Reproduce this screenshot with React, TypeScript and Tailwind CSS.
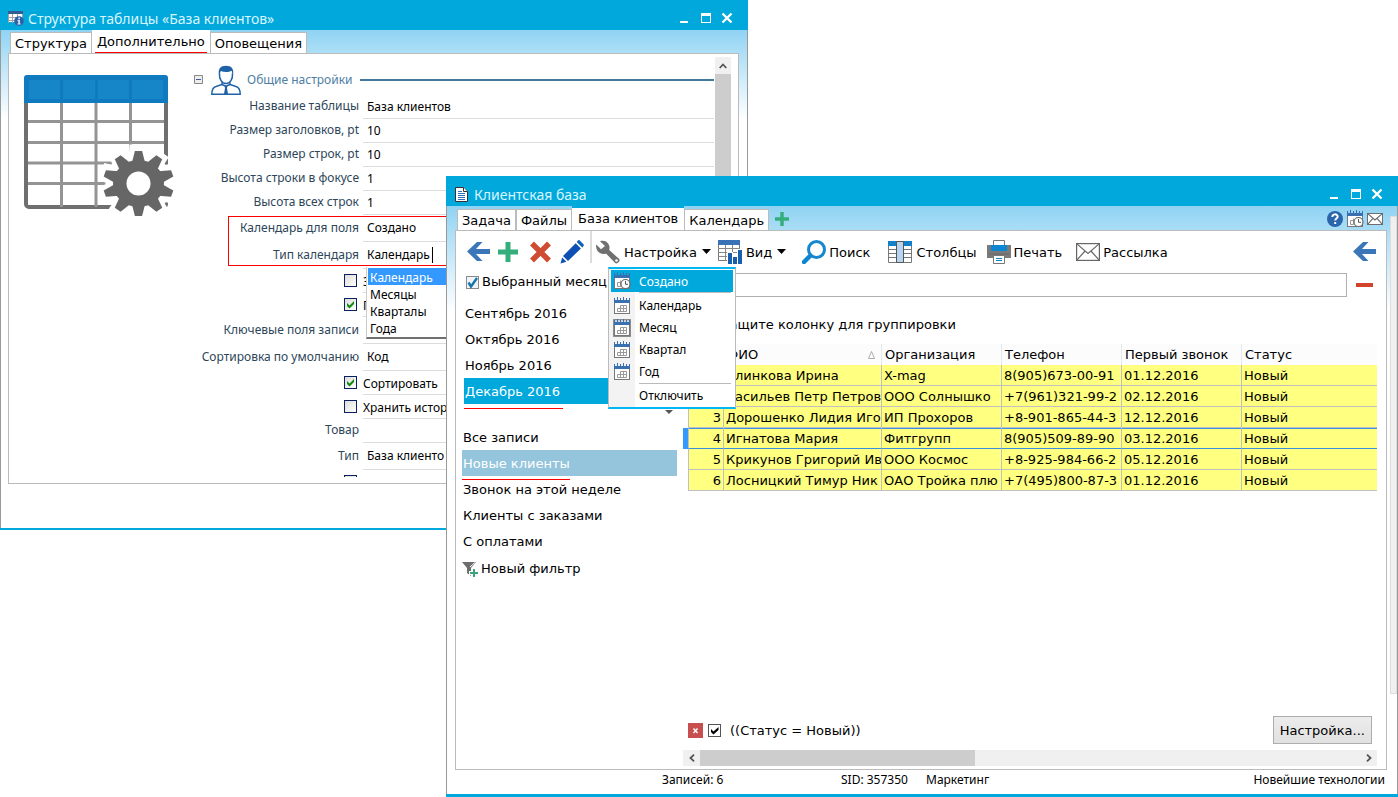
import React from 'react';

const VERDANA = "font-['Verdana','DejaVu_Sans',sans-serif]";
const SEGOE = "font-['Segoe_UI','Noto_Sans',sans-serif]";

type WindowButtonsProps = { className?: string };

function WindowButtons({ className = '' }: WindowButtonsProps) {
  return (
    <div className={`flex items-center gap-[9px] ${className}`}>
      <button type="button" aria-label="Свернуть" className="h-4 w-4">
        <svg viewBox="0 0 16 16" className="h-4 w-4"><path d="M5 11h8v2H5z" fill="#fff" /></svg>
      </button>
      <button type="button" aria-label="Развернуть" className="h-4 w-3">
        <svg viewBox="0 0 12 16" className="h-4 w-3"><path d="M1 3h10v10H1z M2 6v6h8V6z" fill="#fff" fillRule="evenodd" /></svg>
      </button>
      <button type="button" aria-label="Закрыть" className="h-4 w-3">
        <svg viewBox="0 0 12 16" className="h-4 w-3"><path d="M1.500 3.500l9 9M10.500 3.500l-9 9" stroke="#fff" strokeWidth="2.400" /></svg>
      </button>
    </div>
  );
}

function TableInfoIcon() {
  return (
    <svg viewBox="0 0 16 16" className="h-4 w-4">
      <path d="M0 1h15v11H0z" fill="#fff" />
      <path d="M0 1h15v3H0z" fill="#2f5d94" />
      <path d="M0 7.500h15M0 10.500h9M4.500 4v9M9.500 4v4M14.500 4v4M.5 4v9" stroke="#a3a3a3" strokeWidth="1" fill="none" />
      <circle cx="11" cy="11" r="4.800" fill="#2d62a8" />
      <path d="M10.200 7.600h1.800v1.600h-1.800zM9.400 10h2.600v3.400h.8v1H9.400v-1h.8V11h-.8z" fill="#cfe3f6" />
    </svg>
  );
}

function DocIcon() {
  return (
    <svg viewBox="0 0 13 15" className="h-[15px] w-[13px]">
      <path d="M.5.500h8l4 4v10H.5z" fill="#fff" stroke="#333" />
      <path d="M8.500.500v4h4" fill="#fff" stroke="#333" />
      <path d="M3 4.500h4M3 6.500h7M3 8.500h7M3 10.500h7M3 12.500h7" stroke="#2f6fb5" />
    </svg>
  );
}

function TableGearArt() {
  const teeth = [0, 36, 72, 108, 144, 180, 216, 252, 288, 324];
  return (
    <svg viewBox="24 75 152 142" className="h-[142px] w-[152px]" aria-hidden="true">
      <rect x="26" y="77" width="140" height="130" rx="3" fill="#fff" stroke="#6f6f6f" strokeWidth="4" />
      <path d="M61.500 103v104M96 103v104M130.500 103v104" stroke="#949494" strokeWidth="3" />
      <path d="M28 121.500h136M28 142.500h136M28 163h136M28 183.500h136" stroke="#949494" strokeWidth="3" />
      <path d="M24 103V78a3 3 0 0 1 3-3h138a3 3 0 0 1 3 3v25z" fill="#0f7abd" />
      <path d="M29 80h31v19H29zM63 80h32v19H63zM98 80h31v19H98zM132 80h31v19h-31z" fill="#1786c9" />
      <g transform="translate(138.500 183.500)">
        <circle r="33" fill="#fff" />
        {teeth.map((a) => (
          <path key={`w${a}`} d="M-10 -22L-9 -39H9L10 -22z" fill="#fff" transform={`rotate(${a})`} />
        ))}
        <ellipse rx="25.500" ry="23.500" fill="#666" />
        <g transform="scale(1.09 1)">
          {teeth.map((a) => (
            <path key={a} d="M-6 -21L-3.300 -32.500H3.300L6 -21z" fill="#666" transform={`rotate(${a})`} />
          ))}
        </g>
        <circle r="12" fill="#fff" />
      </g>
    </svg>
  );
}

function PersonIcon() {
  return (
    <svg viewBox="0 0 30 30" className="h-[30px] w-[30px]" fill="none" stroke="#1f62a8" strokeWidth="1.500">
      <path d="M8.500 8.500C8 14 11 18.500 15 18.500s7-4.500 6.500-10" />
      <path d="M8 10C6.800 4 9.500.8 15 .8S23.200 4 22 10c-.8-1.500-1-3-1.300-4.200-3 1.600-7.600 1.700-10.900.2C9.300 7.200 9 8.500 8 10z" fill="#1f62a8" stroke="none" />
      <path d="M11 17.500v2L5 21.500C1.500 22.500.8 25 .8 29.200h28.400c0-4.200-.7-6.700-4.200-7.700l-6-2v-2" />
      <path d="M11 19.500l4 1.800 4-1.800" />
      <path d="M13.500 21h3l-.5 2 1 6h-4l1-6z" fill="#1f62a8" stroke="none" />
    </svg>
  );
}

function CalendarIcon({ clock = false, framed = false }: { clock?: boolean; framed?: boolean }) {
  return (
    <svg viewBox="0 0 18 18" className="h-[18px] w-[18px]">
      {framed && <rect x=".5" y=".5" width="17" height="17" rx="1" fill="#ddd" stroke="#8c8c8c" strokeWidth="1.500" />}
      <rect x="1.500" y="5.500" width="15" height="11" fill="#fff" stroke="#777" />
      <path d="M1 1h1v2h2V0h1v3h2V1h1v2h2V0h1v3h2V1h1v2h2V1h1v5H1z" fill="#3a6fb0" />
      {clock ? (
        <>
          <path d="M4.500 10.500h3v4h-3z M7.500 8.500v3" fill="none" stroke="#999" />
          <circle cx="12.500" cy="12" r="4.500" fill="#fff" stroke="#666" strokeWidth="1.200" />
          <path d="M12.500 9v3.300h2.500" fill="none" stroke="#555" />
        </>
      ) : (
        <path d="M7.500 8.500h6v6h-9v-3h9M7.500 8.500v6M10.500 8.500v6" fill="none" stroke="#999" />
      )}
    </svg>
  );
}

function ArrowLeftIcon() {
  return (
    <svg viewBox="0 0 24 24" className="h-6 w-6">
      <path d="M0 11.500L10 2h5.500L9 9H23v5H9l6.500 7H10z" fill="#3b77b8" />
    </svg>
  );
}

function PlusIcon({ className }: { className: string }) {
  return (
    <svg viewBox="0 0 20 20" preserveAspectRatio="xMinYMid meet" className={className}>
      <path d="M7.500 0h5v7.500H20v5h-7.500V20h-5v-7.500H0v-5h7.500z" fill="#35ae7c" />
    </svg>
  );
}

function MailIcon({ className, weight }: { className: string; weight: number }) {
  return (
    <svg viewBox="0 0 24 18" className={className} fill="none" stroke="#666" strokeWidth={weight}>
      <rect x=".6" y=".6" width="22.800" height="16.800" fill="#fff" />
      <path d="M.6.600L12 10.500 23.400.6M.6 17.400L9 8M23.400 17.400L15 8" />
    </svg>
  );
}

function Caret() {
  return (
    <svg viewBox="0 0 9 5" className="h-[5px] w-[9px]"><path d="M0 0h9L4.500 5z" fill="#000" /></svg>
  );
}

function Toolbar() {
  return (
    <div className="flex h-[41px] items-center pr-[9px] pl-[11px]">
      <div className="flex items-center gap-[7px]">
        <button type="button" aria-label="Назад"><ArrowLeftIcon /></button>
        <button type="button" aria-label="Добавить"><PlusIcon className="h-5 w-6" /></button>
        <button type="button" aria-label="Удалить">
          <svg viewBox="0 0 24 24" className="h-6 w-6"><path d="M3 3.500l17 17M20 3.500l-17 17" stroke="#cf4b32" strokeWidth="5.500" /></svg>
        </button>
        <button type="button" aria-label="Изменить">
          <svg viewBox="0 0 24 24" className="h-6 w-6" fill="#0d4fb5">
            <path d="M19.500 .3l4 3.900c.8.800 0 2-.5 2.500l-.8.800-5.500-5.500.8-1c.6-.6 1.400-1.200 2-.7z" fill="#0d63b8" />
            <path d="M15.700 3.300l5.200 5.200L8 21l-5-5z" />
            <path d="M2.200 17.500l4.200 4.200L.5 23.500z" />
          </svg>
        </button>
      </div>
      <span className="mr-[5px] ml-1.5 h-8 w-0.5 self-start bg-[#dcdcdc]" />
      <button type="button" className="-ml-px flex items-center gap-1">
        <svg viewBox="0 0 24 24" className="h-6 w-6 shrink-0">
          <path d="M4 1.200C7.500 0 11.500 1.200 13 5c.7 1.700.6 3.500.2 5l10 9c1.800 1.800-2.200 5.800-4 4L10 13.500C6.500 15 3 13 1.500 11 .3 9.300-.2 6.300.3 4.500L5 9.300 9 6z" fill="#707070" />
          <circle cx="20.500" cy="20.500" r="1.300" fill="#fff" />
        </svg>
        <span className="pt-0.5">Настройка</span>
        <span className="ml-px"><Caret /></span>
      </button>
      <button type="button" className="ml-[7px] flex items-center gap-1">
        <svg viewBox="0 0 24 24" className="h-6 w-6 shrink-0">
          <path d="M.5.500h21v20H.5z" fill="#fff" stroke="#777" />
          <path d="M0 0h22v5H0z" fill="#3b72b5" />
          <path d="M0 8.500h22M0 12.500h22M0 16.500h22M7.500 5v16M14.500 5v16" stroke="#888" />
          <path d="M9 12h6v4h4V9h5v15H9z" fill="#fff" />
          <path d="M10 13h4v11h-4zM15 17h4v7h-4zM20 10h4v14h-4z" fill="#1a5fae" />
        </svg>
        <span className="pt-0.5">Вид</span>
        <span className="ml-px"><Caret /></span>
      </button>
      <button type="button" className="ml-4 flex items-center gap-[3px]">
        <svg viewBox="0 0 24 24" className="h-6 w-6 shrink-0">
          <path d="M2 22l6.500-6.500" stroke="#0c84d0" strokeWidth="4.500" strokeLinecap="round" />
          <circle cx="14.500" cy="9.500" r="8" fill="#fff" stroke="#1487cf" strokeWidth="3" />
        </svg>
        <span className="pt-0.5">Поиск</span>
      </button>
      <button type="button" className="ml-[18px] flex items-center gap-1">
        <svg viewBox="0 0 24 22" className="h-[22px] w-6 shrink-0">
          <path d="M.5.500h23v21H.5z" fill="#fff" stroke="#777" />
          <path d="M0 0h24v5H0z" fill="#1480c8" />
          <path d="M0 8.500h24M0 12.500h24M0 16.500h24" stroke="#777" />
          <path d="M8.500.500h7v21h-7z" fill="#b5d5f0" stroke="#555" />
        </svg>
        <span className="pt-0.5">Столбцы</span>
      </button>
      <button type="button" className="ml-[10px] flex items-center gap-[3px]">
        <svg viewBox="0 0 24 24" className="h-6 w-6 shrink-0">
          <path d="M0 5h4v4h16V5h4v13H0z" fill="#7a7a7a" />
          <path d="M6.500.500h11v5h-11z" fill="#fff" stroke="#777" />
          <path d="M4 5h16v6H4z" fill="#0f86d2" />
          <path d="M2 14h20" stroke="#666" />
          <path d="M6.500 15.500h11v8h-11z" fill="#fff" stroke="#777" />
          <path d="M9 18.500h6M9 20.500h6" stroke="#1480c8" />
        </svg>
        <span className="pt-0.5">Печать</span>
      </button>
      <button type="button" className="ml-[14px] flex items-center gap-[3px]">
        <MailIcon className="h-[18px] w-6 shrink-0" weight={1.2} />
        <span className="pt-0.5">Рассылка</span>
      </button>
      <button type="button" aria-label="Вернуться" className="ml-auto"><ArrowLeftIcon /></button>
    </div>
  );
}

type RowProps = { label: string; id: string; value?: string; height: string };

function TextRow({ label, id, value = '', height }: RowProps) {
  return (
    <div className={`flex gap-1 ${height}`}>
      <label htmlFor={id} className="w-[169px] shrink-0 self-center pb-0.5 text-right text-[12px] leading-4 whitespace-nowrap text-[#2d4659]">{label}</label>
      <input id={id} defaultValue={value} className="min-w-0 flex-1 border-b border-[#dcdcdc] pl-1 text-[12px] text-black outline-none" />
    </div>
  );
}

function CheckRow({ label, id, checked = false }: { label: string; id: string; checked?: boolean }) {
  return (
    <div className="flex h-6 gap-1">
      <span className="flex w-[169px] shrink-0 items-center justify-end pr-0.5 pb-0.5">
        <span className="relative h-[13px] w-[13px]">
          <input id={id} type="checkbox" defaultChecked={checked} className="block h-[13px] w-[13px] appearance-none border border-[#0b1f63] bg-linear-to-br from-[#dcdcd7] to-white" />
          {checked && (
            <svg viewBox="0 0 13 13" className="pointer-events-none absolute inset-0 h-[13px] w-[13px]">
              <path d="M3 5v3l2.500 2.500L10 6V3L5.500 7.500z" fill="#118a11" />
            </svg>
          )}
        </span>
      </span>
      <label htmlFor={id} className="min-w-0 flex-1 border-b border-[#dcdcdc] pt-0.5 text-[12px] leading-[22px] whitespace-nowrap text-black">{label}</label>
    </div>
  );
}

function StructureWindow() {
  const option = 'pt-0.5 pl-0.5 leading-[15px]';
  return (
    <section className={`absolute top-0 left-0 isolate flex w-[748px] flex-col border-b-2 border-[#00a8dc] bg-white ${SEGOE}`}>
      <header className="flex h-[30px] items-center bg-[#00a8dc] px-2 pt-1.5">
        <TableInfoIcon />
        <h1 className="ml-1 pt-0.5 text-[14px] leading-5 text-[#d9f5ff]">Структура таблицы «База клиентов»</h1>
        <WindowButtons className="mr-[7px] ml-auto" />
      </header>
      <div className="border-x border-[#999] bg-white bg-linear-to-b from-[#8fd3f3] to-[#ffffff] to-[18%] pr-2 pb-11 pl-[7px]">
        <div role="tablist" className={`flex h-[23px] items-end pl-0.5 text-[13px] leading-5 text-black ${VERDANA}`}>
          <button type="button" role="tab" className="h-[21px] border border-b-0 border-[#bbb] bg-white px-1 pt-px">Структура</button>
          <button type="button" role="tab" aria-selected="true" className="h-[23px] bg-white px-[3px]">
            <span className="block h-[22px] border-b border-[#f00] px-0.5 leading-[22px]">Дополнительно</span>
          </button>
          <button type="button" role="tab" className="h-[21px] border border-b-0 border-[#bbb] bg-white px-1 pt-px">Оповещения</button>
        </div>
        <div className="flex h-[431px] border border-[#bbb] bg-white pr-[7px] pb-1.5 pl-3.5">
          <div className="ml-px w-[166px] shrink-0 pt-[21px]"><TableGearArt /></div>
          <form className="min-w-0 flex-1 overflow-hidden">
            <div className="flex h-[41px] items-center pt-2.5 pl-1">
              <button type="button" aria-label="Скрыть раздел">
                <svg viewBox="0 0 9 9" className="h-[9px] w-[9px]"><path d="M.5.500h8v8h-8z" fill="#eee" stroke="#888" /><path d="M2 4.500h5" stroke="#3b5fa0" /></svg>
              </button>
              <span className="mr-1.5 ml-2"><PersonIcon /></span>
              <h2 className="text-[12px] leading-4 text-[#4d7ea3]">Общие настройки</h2>
              <span className="ml-2 h-0.5 flex-1 bg-[#44789c]" />
            </div>
            <TextRow id="tname" label="Название таблицы" value="База клиентов" height="h-6" />
            <TextRow id="hsize" label="Размер заголовков, pt" value="10" height="h-6" />
            <TextRow id="rsize" label="Размер строк, pt" value="10" height="h-6" />
            <TextRow id="fheight" label="Высота строки в фокусе" value="1" height="h-6" />
            <TextRow id="rheight" label="Высота всех строк" value="1" height="h-6" />
            <div className="relative">
              <TextRow id="calfield" label="Календарь для поля" value="Создано" height="h-[27px]" />
              <TextRow id="caltype" label="Тип календаря" value="Календарь" height="h-[27px]" />
              <span className="pointer-events-none absolute inset-x-0 top-px bottom-[3px] ml-[38px] border border-[#f00]" />
              <span className="absolute top-8 left-[242px] h-4 w-px bg-black" />
              <ul role="listbox" className="absolute top-[52px] left-44 z-10 w-[170px] border-b-2 border-l border-b-[#707070] border-l-[#ccc] bg-white pt-px pb-px pl-px text-[12px] text-black">
                <li role="option" aria-selected="true" className={`${option} bg-[#3399ff] text-white`}>Календарь</li>
                <li role="option" className={option}>Месяцы</li>
                <li role="option" className={option}>Кварталы</li>
                <li role="option" className={option}>Года</li>
              </ul>
            </div>
            <CheckRow id="c1" label="З" />
            <CheckRow id="c2" label="П" checked />
            <TextRow id="keys" label="Ключевые поля записи" height="h-[27px]" />
            <TextRow id="sort" label="Сортировка по умолчанию" value="Код" height="h-[27px]" />
            <CheckRow id="c3" label="Сортировать" checked />
            <CheckRow id="c4" label="Хранить истор" />
            <TextRow id="goods" label="Товар" height="h-6" />
            <TextRow id="type" label="Тип" value="База клиенто" height="h-[27px]" />
            <CheckRow id="c5" label="" />
          </form>
          <div className="mt-[3px] ml-px flex w-4 shrink-0 flex-col bg-[#f0f0f0]">
            <button type="button" aria-label="Вверх" className="flex h-[17px] items-center justify-center">
              <svg viewBox="0 0 8 6" className="h-1.5 w-2"><path d="M.7 5L4 1.500 7.300 5" fill="none" stroke="#555" strokeWidth="1.800" /></svg>
            </button>
            <div className="h-[300px] bg-[#cdcdcd]" />
          </div>
        </div>
      </div>
    </section>
  );
}

function ContextMenu() {
  const items = ['Календарь', 'Месяц', 'Квартал', 'Год'];
  return (
    <div role="menu" className={`absolute top-[36px] left-[152px] z-20 w-32 border-x border-y-2 border-x-[#bbb] border-y-[#00b7f1] bg-linear-to-r from-[#f3f3f3] from-[26px] to-white to-[26px] py-px pr-0.5 pl-0.5 text-[12px] text-black ${SEGOE}`}>
      <button type="button" role="menuitem" className="flex h-[22px] w-full items-center gap-2 bg-[#00a8dc] pl-0.5 text-white">
        <CalendarIcon clock /><span className="pt-0.5">Создано</span>
      </button>
      <hr className="mr-0.5 mb-0.5 ml-7 border-[#bbb]" />
      {items.map((item) => (
        <button key={item} type="button" role="menuitem" className="flex h-[22px] w-full items-center gap-2 pl-0.5">
          <CalendarIcon framed={item === 'Месяц'} /><span>{item}</span>
        </button>
      ))}
      <hr className="mr-0.5 ml-7 border-[#bbb]" />
      <button type="button" role="menuitem" className="flex h-[22px] w-full items-center pt-0.5 pl-7">Отключить</button>
    </div>
  );
}

const clients = [
  ['1', 'Блинкова Ирина', 'X-mag', '8(905)673-00-91', '01.12.2016'],
  ['2', 'Васильев Петр Петров', 'ООО Солнышко', '+7(961)321-99-2', '02.12.2016'],
  ['3', 'Дорошенко Лидия Иго', 'ИП Прохоров', '+8-901-865-44-3', '12.12.2016'],
  ['4', 'Игнатова Мария', 'Фитгрупп', '8(905)509-89-90', '03.12.2016'],
  ['5', 'Крикунов Григорий Ив', 'ООО Космос', '+8-925-984-66-2', '05.12.2016'],
  ['6', 'Лосницкий Тимур Ник', 'ОАО Тройка плю', '+7(495)800-87-3', '01.12.2016'],
];

function ClientTable() {
  const th = 'h-[21px] overflow-hidden border-r border-[#e3e8f0] pl-[3px] font-normal whitespace-nowrap leading-5';
  return (
    <table className="w-full table-fixed border-separate border-spacing-0 text-left text-[13px] leading-[18px] text-black">
      <colgroup>
        <col className="w-9" /><col className="w-[158px]" /><col className="w-[120px]" /><col className="w-[120px]" /><col className="w-[120px]" /><col />
      </colgroup>
      <thead className="bg-[#fcfcfc]">
        <tr>
          <th className={th} aria-label="Номер" />
          <th className={th}>
            <span className="flex items-center justify-between pr-1.5">ФИО
              <svg viewBox="0 0 7 8" className="h-2 w-[7px]"><path d="M.5 7.500L3.500.500l3 7z" fill="none" stroke="#999" strokeWidth=".8" /></svg>
            </span>
          </th>
          <th className={th}>Организация</th>
          <th className={th}>Телефон</th>
          <th className={th}>Первый звонок</th>
          <th className="h-[21px] pl-[3px] leading-5 font-normal">Статус</th>
        </tr>
      </thead>
      <tbody>
        {clients.map((row) => {
          const focused = row[0] === '4';
          const td = focused
            ? 'h-[21px] overflow-hidden whitespace-nowrap border-r border-b border-x-[#c0c0c0] border-b-[#3c8fe0] bg-[#ffff80] pt-0.5 shadow-[inset_0_1px_0_#3c8fe0]'
            : 'h-[21px] overflow-hidden whitespace-nowrap border-r border-b border-[#c0c0c0] bg-[#ffff80] pt-0.5';
          return (
            <tr key={row[0]}>
              <td className={`${td} border-l pr-0.5 text-right`}>{row[0]}</td>
              <td className={`${td} pl-0.5`}>{row[1]}</td>
              <td className={`${td} pl-0.5`}>{row[2]}</td>
              <td className={`${td} pl-0.5`}>{row[3]}</td>
              <td className={`${td} pl-0.5`}>{row[4]}</td>
              <td className={`${td} border-r-0 pl-0.5`}>Новый</td>
            </tr>
          );
        })}
      </tbody>
    </table>
  );
}

function Sidebar() {
  const item = 'block h-[26px] w-full pl-px text-left leading-7';
  return (
    <aside className="w-[221px] shrink-0">
      <label className="ml-2.5 flex h-5 items-center gap-[3px] whitespace-nowrap">
        <span className="relative h-[13px] w-[13px]">
          <input type="checkbox" defaultChecked className="block h-[13px] w-[13px] appearance-none border border-[#8a8a8a] bg-[#f0f4f8]" />
          <svg viewBox="0 0 13 13" className="pointer-events-none absolute inset-0 h-[13px] w-[13px]"><path d="M2.500 6.500L5 10.500 11 2" fill="none" stroke="#1674a8" strokeWidth="2.400" /></svg>
        </span>
        Выбранный месяц
      </label>
      <div className="mt-2 ml-2">
        <button type="button" className={item}>Сентябрь 2016</button>
        <button type="button" className={item}>Октябрь 2016</button>
        <button type="button" className={item}>Ноябрь 2016</button>
        <button type="button" className={`${item} bg-[#00a8dc] text-white`}>Декабрь 2016</button>
        <div className="flex h-2.5 items-start justify-between pt-1 pr-1">
          <span className="h-px w-[99px] bg-[#f00]" />
          <svg viewBox="0 0 8 4" className="mt-0.5 h-1 w-2"><path d="M0 0h8L4 4z" fill="#555" /></svg>
        </div>
      </div>
      <div className="mt-2.5 ml-1.5">
        <button type="button" className={item}>Все записи</button>
        <button type="button" className={`${item} bg-[#94c5dc] text-white`}>Новые клиенты</button>
        <div className="relative">
          <span className="absolute top-[3px] left-0 h-px w-[108px] bg-[#f00]" />
          <button type="button" className={item}>Звонок на этой неделе</button>
        </div>
        <button type="button" className={item}>Клиенты с заказами</button>
        <button type="button" className={item}>С оплатами</button>
        <button type="button" className="mt-0.5 flex h-[26px] items-center gap-[3px] leading-7">
          <svg viewBox="0 0 16 15" className="h-[15px] w-4">
            <path d="M0 0h14L9 6v8l-4-3V6z" fill="#6d6d6d" />
            <path d="M8 5l5-4.500" stroke="#fff" />
            <path d="M12 6v9M7 11h9" stroke="#fff" strokeWidth="4" />
            <path d="M12 7v8M8 11h8" stroke="#35a77a" strokeWidth="2" />
          </svg>
          Новый фильтр
        </button>
      </div>
    </aside>
  );
}

function ClientWindow() {
  const tab = 'h-[21px] border border-b-0 border-[#bbb] bg-white px-1 pt-px';
  return (
    <section className={`absolute top-[176px] right-0 bottom-0 left-[446px] isolate flex flex-col border-b-[3px] border-[#00a8dc] bg-white text-[13px] leading-5 text-black ${VERDANA}`}>
      <header className={`flex h-[30px] shrink-0 items-center bg-[#00a8dc] pt-1.5 pr-3 pl-[9px] ${SEGOE}`}>
        <DocIcon />
        <h1 className="ml-1.5 pt-0.5 text-[14px] text-[#d9f5ff]">Клиентская база</h1>
        <WindowButtons className="mr-[3px] ml-auto" />
      </header>
      <div className="relative flex flex-1 flex-col border-x border-[#999] bg-linear-to-b from-[#8fd3f3] to-white to-[18%] pr-[10px] pl-2">
        <div className="flex h-6 shrink-0 items-end pl-[2px]">
          <div role="tablist" className="flex items-end">
            <button type="button" role="tab" className={tab}>Задача</button>
            <button type="button" role="tab" className={tab}>Файлы</button>
            <button type="button" role="tab" aria-selected="true" className="h-6 border-t-2 border-[#00a8dc] bg-white px-1.5 pb-px">База клиентов</button>
            <button type="button" role="tab" className={tab}>Календарь</button>
          </div>
          <button type="button" aria-label="Добавить вкладку" className="mb-1 ml-1.5"><PlusIcon className="h-3.5 w-3.5" /></button>
          <div className="mb-0.5 ml-auto flex items-center gap-[3px] pr-1">
            <button type="button" aria-label="Справка">
              <svg viewBox="0 0 16 16" className="h-4 w-4"><circle cx="8" cy="8" r="8" fill="#2a66ac" /><path d="M5.300 6c0-3.600 5.400-3.400 5.400-.4 0 2-2.500 2-2.500 4" fill="none" stroke="#fff" strokeWidth="1.900" /><path d="M7.200 11h2v2h-2z" fill="#fff" /></svg>
            </button>
            <button type="button" aria-label="Планировщик"><CalendarIcon clock /></button>
            <button type="button" aria-label="Почта"><MailIcon className="h-3 w-4" weight={1.6} /></button>
          </div>
        </div>
        <main className="relative flex min-h-0 flex-1 flex-col border border-[#bbb] bg-white">
          <Toolbar />
          <ContextMenu />
          <div className="flex min-h-0 flex-1">
            <Sidebar />
            <div className="flex min-w-0 flex-1 flex-col pr-[9px] pl-1.5">
              <div className="mt-px flex items-center gap-[9px] pl-[5px]">
                <input aria-label="Строка поиска" className="h-6 min-w-0 flex-1 border border-[#b0b0b0] bg-white px-1 outline-none" />
                <button type="button" aria-label="Очистить" className="mr-1 h-6 w-[17px]"><span className="block h-1 bg-[#d1432a]" /></button>
              </div>
              <div className="flex h-[47px] items-center pt-2 pl-[5px] whitespace-nowrap">Перетащите колонку для группировки</div>
              <div className="relative pl-[5px]">
                <span className="absolute top-[84px] left-0 h-[21px] w-[5px] bg-[#3399ff]" />
                <ClientTable />
              </div>
              <div className="mt-auto flex items-center pr-[5px] pl-[5px]">
                <button type="button" aria-label="Сбросить фильтр" className="h-[15px] w-[15px] bg-[#c84f4f]">
                  <svg viewBox="0 0 15 15" className="h-[15px] w-[15px]"><path d="M5.500 5.500l4 4.500M9.500 5.500l-4 4.500" stroke="#fff" strokeWidth="1.400" /></svg>
                </button>
                <label className="ml-[5px] flex items-center gap-[9px]">
                  <span className="relative h-[13px] w-[13px]">
                    <input type="checkbox" defaultChecked className="block h-[13px] w-[13px] appearance-none border border-[#555] bg-white" />
                    <svg viewBox="0 0 13 13" className="pointer-events-none absolute inset-0 h-[13px] w-[13px]"><path d="M3 5v3l2.500 2.500L10.500 6V3L5.500 7.500z" fill="#000" /></svg>
                  </span>
                  <span className="pt-0.5">((Статус = Новый))</span>
                </label>
                <button type="button" className="ml-auto h-7 border border-[#adadad] bg-linear-to-b from-[#ececec] to-[#e1e1e1] px-1.5 pt-px">Настройка...</button>
              </div>
              <div className="mt-1.5 mb-[3px] flex h-4 items-center bg-[#f0f0f0]">
                <button type="button" aria-label="Влево" className="flex w-[17px] justify-center">
                  <svg viewBox="0 0 6 8" className="h-2 w-1.5"><path d="M5 .7L1.500 4 5 7.300" fill="none" stroke="#555" strokeWidth="1.800" /></svg>
                </button>
                <div className="h-full w-[275px] bg-[#cdcdcd]" />
                <button type="button" aria-label="Вправо" className="ml-auto flex w-[17px] justify-center">
                  <svg viewBox="0 0 6 8" className="h-2 w-1.5"><path d="M1 .7L4.500 4 1 7.300" fill="none" stroke="#555" strokeWidth="1.800" /></svg>
                </button>
              </div>
            </div>
          </div>
        </main>
        <footer className={`flex h-6 shrink-0 items-center pb-1 text-[12px] ${SEGOE}`}>
          <span className="ml-[207px] w-[179px]">Записей: 6</span>
          <span className="w-[85px]">SID: 357350</span>
          <span>Маркетинг</span>
          <span className="ml-auto pr-0.5">Новейшие технологии</span>
        </footer>
        <div className="absolute top-[10px] right-0 h-[478px] w-[7px] border border-[#ddd] bg-[#f0f0f0]" />
      </div>
    </section>
  );
}

export default function App() {
  return (
    <div className="relative min-h-screen overflow-hidden bg-white">
      <StructureWindow />
      <ClientWindow />
    </div>
  );
}
